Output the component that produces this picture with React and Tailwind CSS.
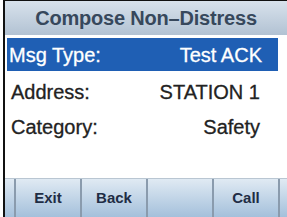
export default function App() {
  const font = { fontFamily: '"Liberation Sans", Arial, sans-serif' };
  const keys = ["Exit", "Back", "", "Call"];
  return (
    <div className="w-[287px] h-[217px] bg-white pl-[3px] overflow-hidden" style={font}>
      <div className="h-full border-l-2 border-t border-[#111] flex flex-col">
        {/* Title */}
        <div className="h-[34px] shrink-0 bg-gradient-to-b from-[#d8e2ec] to-[#b2c2d3] flex items-center justify-center">
          <span className="text-[20px] font-bold text-[#37485c] tracking-[-0.2px]">Compose Non–Distress</span>
        </div>

        {/* Rows */}
        <div className="flex flex-col pt-[3px] [-webkit-text-stroke:0.3px]">
          <div className="h-[33px] ml-[2px] mr-[9px] bg-[#1f5fb4] flex items-center justify-between pl-[2px] pr-[16px] text-white text-[20px]">
            <span>Msg Type:</span>
            <span>Test ACK</span>
          </div>
          <div className="h-[36px] mt-[3px] flex items-center justify-between pl-[6px] pr-[27px] text-[20px] text-[#222]">
            <span>Address:</span>
            <span>STATION 1</span>
          </div>
          <div className="h-[34px] flex items-center justify-between pl-[6px] pr-[27px] text-[20px] text-[#222]">
            <span>Category:</span>
            <span>Safety</span>
          </div>
        </div>

        <div className="flex-1" />

        {/* Soft keys */}
        <div className="h-[39px] shrink-0 bg-gradient-to-b from-[#e0eaf3] to-[#a4c0db] border-t border-[#b9c6d2] flex">
          <div className="w-[11px] border-r-2 border-[#8a9bad]" />
          {keys.map((k, i) => (
            <div
              key={i}
              className="w-[66px] border-r-2 border-[#8a9bad] flex items-center justify-center text-[15px] font-bold text-[#1f2d45]"
            >
              {k}
            </div>
          ))}
          <div className="flex-1" />
        </div>
      </div>
    </div>
  );
}
